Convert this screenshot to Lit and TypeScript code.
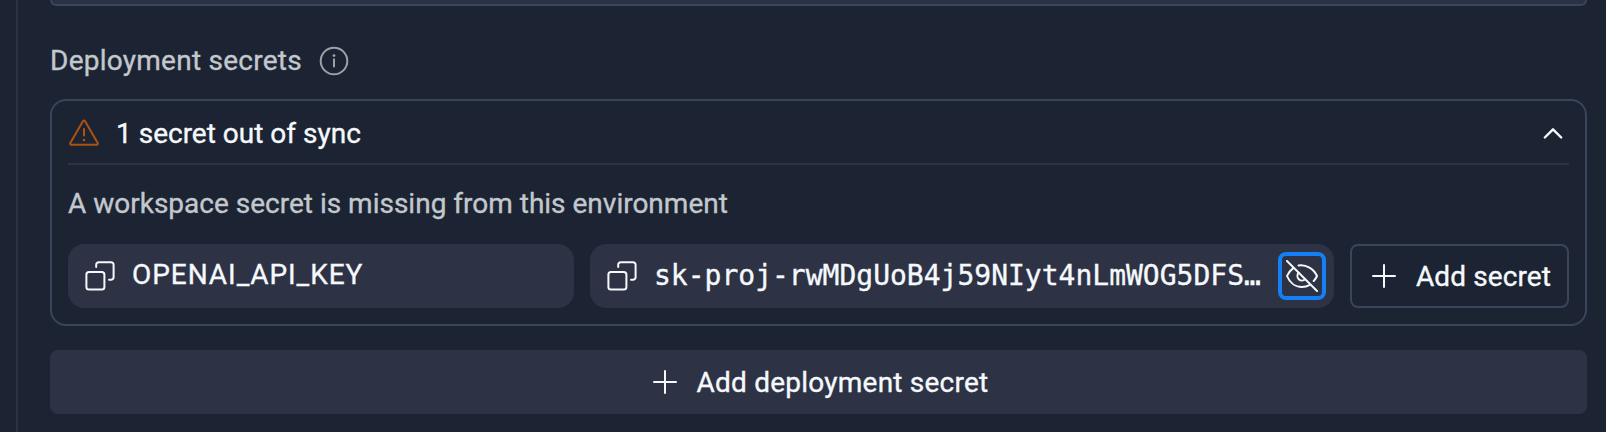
import { LitElement, html, css, svg } from "lit";
import { customElement, property } from "lit/decorators.js";

const ICONS: Record<string, unknown> = {
  info: svg`<circle cx="16" cy="16" r="13.3" /><path d="M16 14.2V21.5" /><circle class="dot" cx="16" cy="10.6" r="1.4" />`,
  warning: svg`<path d="M14.9 4.2a1.3 1.3 0 0 1 2.2 0L29.7 26a1.2 1.2 0 0 1-1.1 1.8H3.4a1.2 1.2 0 0 1-1.1-1.8Z" /><path d="M16 12V18.500" /><circle class="dot" cx="16" cy="23" r="1.3" />`,
  chevron: svg`<path class="bold" d="M7.8 20.5 16 12.3l8.2 8.2" />`,
  copy: svg`<rect x="2.4" y="12" width="18" height="17.6" rx="2.6" /><path d="M12.2 7V5A2.6 2.6 0 0 1 14.8 2.2H27A2.6 2.6 0 0 1 29.6 5V17.2A2.6 2.6 0 0 1 27 19.8H25" />`,
  plus: svg`<path d="M16 5V27M5 16H27" />`,
  hide: svg`<path d="M1 1 31 31" /><path d="M7 8.4C4 10.6 2 13.5 1 16c2.500 6.200 8 11 15 11 2.800 0 5.300-.7 7.400-1.900" /><path d="M12.500 5.400C20 4 28 9 31 16c-.8 1.900-1.900 3.500-3.300 5" /><path d="M12.700 12.800a4.500 4.500 0 0 0 6.500 6.300" />`,
};

@customElement("ui-icon")
class UiIcon extends LitElement {
  @property() name = "plus";
  static styles = css`
    :host { display: block; width: 32px; height: 32px; flex: none; }
    svg { display: block; width: 32px; height: 32px; fill: none; stroke: currentColor; stroke-width: 2; stroke-linecap: round; stroke-linejoin: round; }
    .dot { fill: currentColor; stroke: none; }
    .bold { stroke-width: 2.4; }
  `;
  render() {
    return html`<svg viewBox="0 0 32 32" aria-hidden="true">${ICONS[this.name]}</svg>`;
  }
}

@customElement("app-root")
class AppRoot extends LitElement {
  static styles = css`
    :host {
      display: block; height: 432px; box-sizing: border-box; overflow: hidden;
      padding-left: 16px; background: #1c2333; color: #f5f9fc;
      font: 400 28px/36px Roboto, "Liberation Sans", sans-serif;
      -webkit-text-stroke: 0.35px currentColor;
    }
    * { box-sizing: border-box; }
    .pane { height: 432px; border-left: 2px solid #2b3245; padding: 0 19px 0 32px; display: flex; flex-direction: column; }
    .previous { height: 6px; flex: none; border: 2px solid #3c445c; border-top: 0; border-radius: 0 0 8px 8px; background: #2b3245; }
    .title { display: flex; align-items: center; gap: 16px; height: 36px; margin: 37px 0 20px; color: #c2c8cc; }
    .title ui-icon { color: #9da2a6; }
    .label { letter-spacing: 0.25px; }
    .panel { height: 227px; border: 2px solid #3c445c; border-radius: 16px; padding: 0 16px; }
    .summary { height: 64px; padding-top: 2px; border-bottom: 2px solid #2b3245; display: flex; align-items: center; gap: 16px; }
    .warn { color: #ab5310; }
    .headline { flex: 1; padding-top: 2px; }
    .note { height: 79px; padding-top: 21px; color: #c2c8cc; white-space: nowrap; }
    .row { display: flex; gap: 16px; height: 64px; }
    .box { border-radius: 16px; background: #2d3245; display: flex; align-items: center; gap: 16px; padding: 0 8px 0 16px; }
    .key { width: 506px; }
    .name { letter-spacing: 0.95px; padding-bottom: 2px; }
    .value { flex: 1; }
    .mono { font-family: "DejaVu Sans Mono", monospace; flex: 1; white-space: nowrap; }
    .eye { width: 48px; height: 48px; border: 4px solid #1580f5; border-radius: 8px; display: flex; align-items: center; justify-content: center; }
    .btn { display: flex; align-items: center; justify-content: center; gap: 16px; border-radius: 8px; white-space: nowrap; }
    .outline { width: 219px; border: 2px solid #3c445c; }
    .action { letter-spacing: 0.22px; padding-top: 2px; }
    .outline .action { letter-spacing: 0.1px; }
    .wide { height: 64px; margin-top: 24px; background: #2d3245; }
  `;
  render() {
    return html`
      <main class="pane">
        <div class="previous"></div>
        <div class="title"><span class="label">Deployment secrets</span><ui-icon name="info"></ui-icon></div>
        <section class="panel">
          <div class="summary">
            <ui-icon class="warn" name="warning"></ui-icon>
            <span class="headline">1 secret out of sync</span>
            <ui-icon name="chevron"></ui-icon>
          </div>
          <div class="note">A workspace secret is missing from this environment</div>
          <div class="row">
            <div class="box key"><ui-icon name="copy"></ui-icon><span class="name">OPENAI_API_KEY</span></div>
            <div class="box value">
              <ui-icon name="copy"></ui-icon>
              <span class="mono">sk-proj-rwMDgUoB4j59NIyt4nLmWOG5DFS…</span>
              <div class="eye"><ui-icon name="hide"></ui-icon></div>
            </div>
            <div class="btn outline"><ui-icon name="plus"></ui-icon><span class="action">Add secret</span></div>
          </div>
        </section>
        <div class="btn wide"><ui-icon name="plus"></ui-icon><span class="action">Add deployment secret</span></div>
      </main>
    `;
  }
}
